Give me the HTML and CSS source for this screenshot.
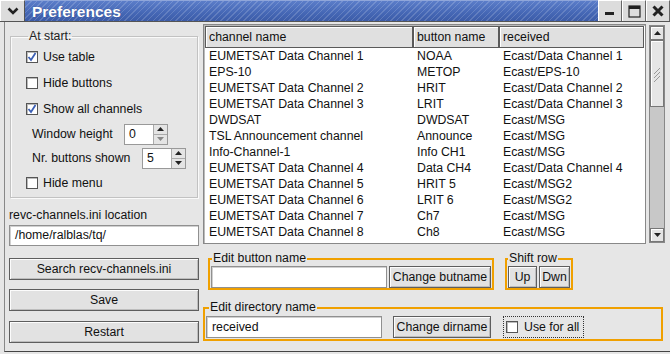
FILE: index.html
```html
<!DOCTYPE html>
<html lang="en">
<head>
  <meta charset="UTF-8" />
  <title>Preferences</title>
  <link rel="stylesheet" href="styles.css">
</head>
<body>
  <div class="window">
    <div class="titlebar">
      <div class="menu-btn">
        <svg width="12" height="8" viewBox="0 0 12 8"><polyline points="1.5,1.5 6,6 10.5,1.5" fill="none" stroke="#222" stroke-width="2.6"/></svg>
      </div>
      <div class="title">Preferences</div>
      <div class="wm-btn">
        <svg width="12" height="12" viewBox="0 0 12 12"><rect x="1" y="7" width="9" height="3" fill="#222"/></svg>
      </div>
      <div class="wm-btn">
        <svg width="13" height="13" viewBox="0 0 13 13"><rect x="1" y="1" width="11" height="11" fill="none" stroke="#222" stroke-width="1.2"/><rect x="1" y="1" width="11" height="3" fill="#222"/></svg>
      </div>
      <div class="wm-btn">
        <svg width="12" height="12" viewBox="0 0 12 12"><path d="M1.5 1.5 L10.5 10.5 M10.5 1.5 L1.5 10.5" stroke="#222" stroke-width="3"/></svg>
      </div>
    </div>

    <div class="client">
      <div class="left-col">
        <fieldset class="group">
          <legend>At start:</legend>
          <div class="check-row"><span class="check checked"><svg width="10" height="10" viewBox="0 0 10 10"><polyline points="1.5,5 4,8 8.5,1" fill="none" stroke="#3b5fb5" stroke-width="1.8"/></svg></span>Use table</div>
          <div class="check-row"><span class="check"></span>Hide buttons</div>
          <div class="check-row"><span class="check checked"><svg width="10" height="10" viewBox="0 0 10 10"><polyline points="1.5,5 4,8 8.5,1" fill="none" stroke="#3b5fb5" stroke-width="1.8"/></svg></span>Show all channels</div>
          <div class="spin-row">
            <span class="spin-label">Window height</span>
            <div class="spin">
              <div class="spin-value">0</div>
              <div class="spin-arrows">
                <div class="arrow"><svg width="7" height="4" viewBox="0 0 7 4"><polygon points="0,4 3.5,0 7,4" fill="#222"/></svg></div>
                <div class="arrow"><svg width="7" height="4" viewBox="0 0 7 4"><polygon points="0,0 3.5,4 7,0" fill="#888"/></svg></div>
              </div>
            </div>
          </div>
          <div class="spin-row">
            <span class="spin-label wide">Nr. buttons shown</span>
            <div class="spin">
              <div class="spin-value">5</div>
              <div class="spin-arrows">
                <div class="arrow"><svg width="7" height="4" viewBox="0 0 7 4"><polygon points="0,4 3.5,0 7,4" fill="#222"/></svg></div>
                <div class="arrow"><svg width="7" height="4" viewBox="0 0 7 4"><polygon points="0,0 3.5,4 7,0" fill="#222"/></svg></div>
              </div>
            </div>
          </div>
          <div class="check-row"><span class="check"></span>Hide menu</div>
        </fieldset>

        <div class="loc-label">revc-channels.ini location</div>
        <div class="entry loc-entry">/home/ralblas/tq/</div>
        <div class="btn side-btn search">Search recv-channels.ini</div>
        <div class="btn side-btn save">Save</div>
        <div class="btn side-btn restart">Restart</div>
      </div>

      <div class="right-col">
        <div class="list-area">
          <div class="table">
            <div class="th">channel name</div><div class="th">button name</div><div class="th">received</div>
          </div>
          <div class="scrollbar">
            <div class="sb-btn"><svg width="7" height="4" viewBox="0 0 7 4"><polygon points="0,4 3.5,0 7,4" fill="#222"/></svg></div>
            <div class="sb-thumb">
              <svg width="8" height="18" viewBox="0 0 8 18"><path d="M1 9 L7 3 M1 13 L7 7 M1 17 L7 11" stroke="#999" stroke-width="1"/></svg>
            </div>
            <div class="sb-track"></div>
            <div class="sb-btn"><svg width="7" height="4" viewBox="0 0 7 4"><polygon points="0,0 3.5,4 7,0" fill="#222"/></svg></div>
          </div>
        </div>

        <div class="edit-row">
          <fieldset class="ogroup butname">
            <legend>Edit button name</legend>
            <div class="orow">
              <div class="entry name-entry"></div>
              <div class="btn change-btn">Change butname</div>
            </div>
          </fieldset>
          <fieldset class="ogroup shift">
            <legend>Shift row</legend>
            <div class="orow">
              <div class="btn small-btn up">Up</div>
              <div class="btn small-btn dwn">Dwn</div>
            </div>
          </fieldset>
        </div>

        <fieldset class="ogroup dirname">
          <legend>Edit directory name</legend>
          <div class="orow">
            <div class="entry dir-entry">received</div>
            <div class="btn change-dir">Change dirname</div>
            <div class="use-all"><span class="check"></span>Use for all</div>
          </div>
        </fieldset>
      </div>
    </div>
  </div>

  <script>
    const rows = [
      ["EUMETSAT Data Channel 1", "NOAA", "Ecast/Data Channel 1"],
      ["EPS-10", "METOP", "Ecast/EPS-10"],
      ["EUMETSAT Data Channel 2", "HRIT", "Ecast/Data Channel 2"],
      ["EUMETSAT Data Channel 3", "LRIT", "Ecast/Data Channel 3"],
      ["DWDSAT", "DWDSAT", "Ecast/MSG"],
      ["TSL Announcement channel", "Announce", "Ecast/MSG"],
      ["Info-Channel-1", "Info CH1", "Ecast/MSG"],
      ["EUMETSAT Data Channel 4", "Data CH4", "Ecast/Data Channel 4"],
      ["EUMETSAT Data Channel 5", "HRIT 5", "Ecast/MSG2"],
      ["EUMETSAT Data Channel 6", "LRIT 6", "Ecast/MSG2"],
      ["EUMETSAT Data Channel 7", "Ch7", "Ecast/MSG"],
      ["EUMETSAT Data Channel 8", "Ch8", "Ecast/MSG"]
    ];

    const table = document.querySelector(".table");
    rows.forEach(r => {
      r.forEach(text => {
        const cell = document.createElement("div");
        cell.className = "td";
        cell.textContent = text;
        table.appendChild(cell);
      });
    });
  </script>
</body>
</html>
```

FILE: styles.css
```css
* {
  box-sizing: border-box;
}

body {
  margin: 0;
  font-family: "Liberation Sans", Arial, sans-serif;
  font-size: 12.3px;
  color: #111;
  background: #3a5a9c;
}

.window {
  width: 670px;
  height: 354px;
  background: #e6e6e6;
  display: flex;
  flex-direction: column;
  overflow: hidden;
}

/* title bar */
.titlebar {
  height: 22px;
  display: flex;
  background: #d6d6d6;
  border-bottom: 1px solid #555;
}

.menu-btn {
  width: 25px;
  display: flex;
  align-items: center;
  justify-content: center;
  background: #dcdcdc;
  border-top: 1px solid #fff;
  border-left: 1px solid #fff;
  border-right: 1px solid #555;
}

.title {
  flex: 1;
  color: #fff;
  font-weight: bold;
  font-size: 15.5px;
  line-height: 21px;
  padding-left: 7px;
  border-top: 1px solid #8fa6da;
  background:
    repeating-linear-gradient(135deg, rgba(255,255,255,0.16) 0 1px, rgba(255,255,255,0) 1px 4px),
    linear-gradient(#5b7dc9, #4567b5 60%, #3c5ca8);
  text-shadow: 0 0 1px #2a4485;
}

.wm-btn {
  width: 24px;
  display: flex;
  align-items: center;
  justify-content: center;
  background: #dcdcdc;
  border-top: 1px solid #fff;
  border-left: 1px solid #fff;
  border-right: 1px solid #666;
}

/* client area */
.client {
  flex: 1;
  display: flex;
  gap: 4px;
  padding: 0 5px 0 4px;
  border-left: 1px solid #888;
  margin-left: 4px;
  border-bottom: 1px solid #444;
  margin-bottom: 2px;
}

.left-col {
  width: 190px;
  display: flex;
  flex-direction: column;
}

.group {
  margin: 7px 1px 0 1px;
  padding: 0 4px 1px 15px;
  border: 1px solid #c2c2c2;
  box-shadow: inset 1px 1px 0 #fafafa, 1px 1px 0 #fafafa;
}

.group legend {
  padding: 0 1px;
  margin-left: 2px;
  line-height: 15px;
  color: #222;
}

.check-row {
  height: 26px;
  display: flex;
  align-items: center;
  gap: 5px;
}

.check {
  width: 12px;
  height: 12px;
  background: #fff;
  border: 1px solid #555;
  box-shadow: inset 1px 1px 0 #bbb;
  display: flex;
  align-items: center;
  justify-content: center;
}

.spin-row {
  height: 24px;
  display: flex;
  align-items: center;
  padding-left: 6px;
}

.spin-label {
  width: 92px;
}

.spin-label.wide {
  width: 110px;
}

.spin {
  width: 44px;
  height: 21px;
  display: flex;
  border: 1px solid #999;
  background: #fff;
}

.spin-value {
  flex: 1;
  padding-left: 4px;
  line-height: 19px;
}

.spin-arrows {
  width: 14px;
  display: flex;
  flex-direction: column;
  border-left: 1px solid #aaa;
}

.arrow {
  flex: 1;
  display: flex;
  align-items: center;
  justify-content: center;
  background: #e4e4e4;
  border-bottom: 1px solid #aaa;
}

.arrow:last-child {
  border-bottom: none;
}

.loc-label {
  margin-top: 10px;
  line-height: 15px;
}

.entry {
  background: #fff;
  border: 1px solid #909090;
  box-shadow: inset 1px 1px 0 #d0d0d0;
  padding-left: 5px;
}

.loc-entry {
  margin-top: 2px;
  height: 21px;
  line-height: 19px;
}

.btn {
  background: #e2e2e2;
  border: 1px solid #5e5e5e;
  box-shadow: inset 1px 1px 0 #fcfcfc, inset -1px -1px 0 #bdbdbd;
  text-align: center;
}

.side-btn {
  height: 22px;
  line-height: 20px;
}

.search {
  margin-top: 12px;
}

.save {
  margin-top: 9px;
}

.restart {
  margin-top: 10px;
}

/* channel list */
.right-col {
  flex: 1;
  display: flex;
  flex-direction: column;
}

.list-area {
  margin-top: 2px;
  height: 220px;
  display: flex;
  gap: 3px;
}

.table {
  width: 443px;
  background: #fff;
  border: 1px solid #888;
  box-shadow: inset 1px 1px 0 #bbb;
  padding: 1px 0 0 1px;
  display: grid;
  grid-template-columns: 208px 86px 145px;
  grid-template-rows: 22px;
  grid-auto-rows: 16px;
  align-content: start;
}

.th {
  height: 22px;
  line-height: 20px;
  padding-left: 3px;
  background: #e0e0e0;
  border: 1px solid #5a5a5a;
  box-shadow: inset 1px 1px 0 #fff;
}

.td {
  line-height: 16px;
  padding-left: 4px;
  white-space: nowrap;
  overflow: hidden;
}

.scrollbar {
  width: 16px;
  margin-top: 1px;
  height: 218px;
  display: flex;
  flex-direction: column;
  background: #c8c8c8;
  border: 1px solid #888;
}

.sb-btn {
  height: 14px;
  display: flex;
  align-items: center;
  justify-content: center;
  background: #e4e4e4;
  border: 1px solid #777;
  box-shadow: inset 1px 1px 0 #fff;
}

.sb-thumb {
  height: 67px;
  display: flex;
  align-items: center;
  justify-content: center;
  background: #e6e6e6;
  border: 1px solid #777;
  box-shadow: inset 1px 1px 0 #fff;
}

.sb-track {
  flex: 1;
}

/* orange group boxes */
.ogroup {
  margin: 0;
  padding: 0 1px 0 1px;
  border: 2px solid #f0a000;
}

.ogroup legend {
  padding: 0 1px;
  margin-left: 1px;
  line-height: 15px;
}

.orow {
  display: flex;
  align-items: center;
}

.edit-row {
  display: flex;
  gap: 11px;
  margin-top: 7px;
  padding-left: 5px;
}

.butname {
  width: 285px;
  height: 39px;
}

.name-entry {
  width: 176px;
  height: 22px;
}

.change-btn {
  margin-left: 2px;
  width: 102px;
  height: 22px;
  line-height: 20px;
}

.shift {
  width: 68px;
  height: 39px;
}

.shift legend {
  margin-left: 0;
}

.small-btn {
  height: 22px;
  line-height: 20px;
}

.up {
  width: 29px;
}

.dwn {
  width: 31px;
  margin-left: 2px;
}

.dirname {
  margin-top: 10px;
  width: 460px;
  height: 41px;
  padding-top: 1px;
}

.dirname legend {
  margin-left: 3px;
}

.dir-entry {
  width: 176px;
  height: 22px;
  line-height: 20px;
}

.change-dir {
  margin-left: 11px;
  width: 98px;
  height: 22px;
  line-height: 20px;
}

.use-all {
  margin-left: 12px;
  width: 81px;
  height: 22px;
  display: flex;
  align-items: center;
  gap: 6px;
  padding-left: 2px;
  border: 1px dotted #333;
}
```
